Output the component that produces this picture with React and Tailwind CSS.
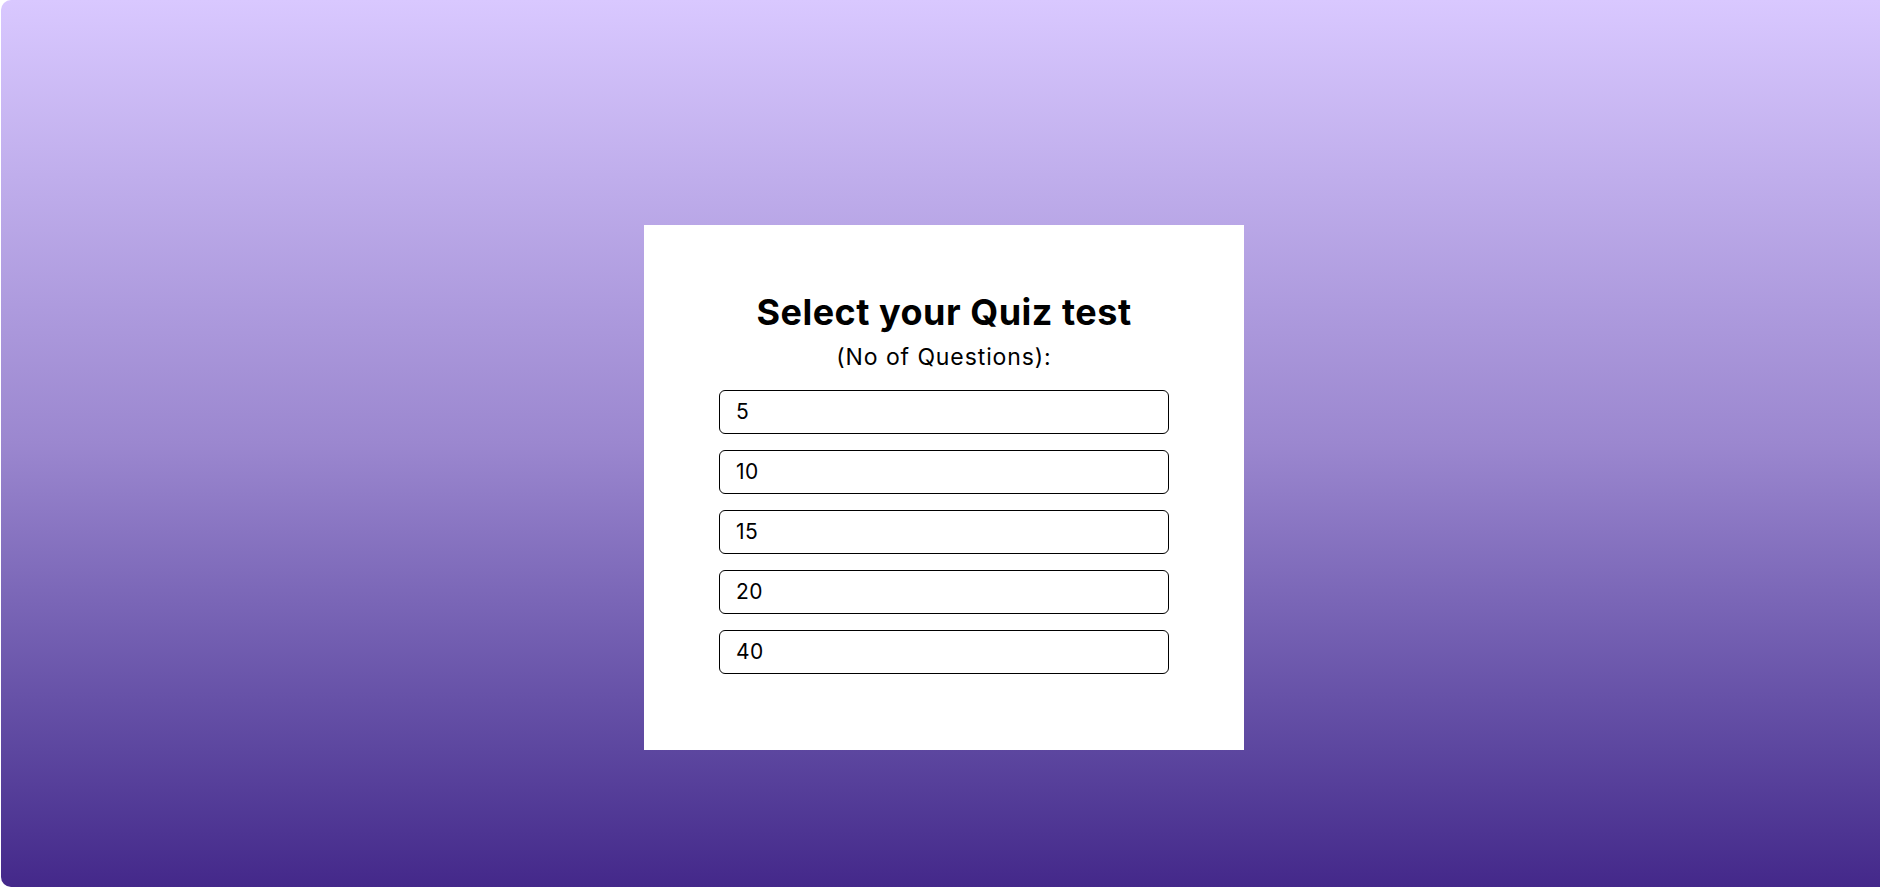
import React, { useState } from 'react';

const options = [5, 10, 15, 20, 40];

const App = () => {
  const [selected, setSelected] = useState(null);

  return (
    <div className="w-full h-[887px] bg-white pl-px overflow-hidden font-['Inter',sans-serif]">
      {/* Background */}
      <div className="h-full rounded-l-[10px] bg-gradient-to-b from-[#d9c8ff] via-[#9b87cf] to-[#44288a] flex flex-col items-center pt-[225px] pl-[7px]">
        {/* Card */}
        <div className="w-[600px] h-[525px] bg-white flex flex-col items-center pt-[67px]">
          <h1 className="text-[36px] leading-[40px] font-bold text-black tracking-[0.5px]">
            Select your Quiz test
          </h1>
          <p className="text-[23px] leading-[32px] text-black mt-[9px] tracking-[0.9px]">(No of Questions):</p>

          <div className="flex flex-col gap-[16px] mt-[17px]">
            {options.map(n => (
              <button
                key={n}
                onClick={() => setSelected(n)}
                className={`w-[450px] h-[44px] border border-black rounded-[6px] text-left pl-[16px] text-[21px] text-black tracking-[0.5px] ${
                  selected === n ? 'bg-gray-100' : 'bg-white'
                }`}
              >
                {n}
              </button>
            ))}
          </div>
        </div>
      </div>
    </div>
  );
};

export default App;
